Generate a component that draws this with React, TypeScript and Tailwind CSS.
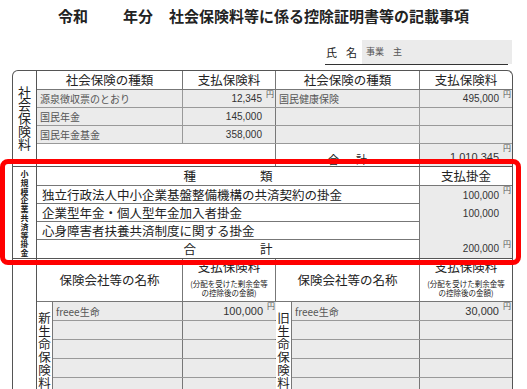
import React from "react";

const jp = "font-['Noto_Sans_CJK_JP',sans-serif]";
const num = "font-['Liberation_Sans','Noto_Sans_CJK_JP',sans-serif]";

function Vertical({ text, className }: { text: string; className: string }) {
  return (
    <div className={`flex flex-col items-center ${className}`}>
      {text.split("").map((c, i) => (
        <span key={i}>{c}</span>
      ))}
    </div>
  );
}

function Amount({
  value,
  yen,
  className = "",
}: {
  value?: string;
  yen?: boolean;
  className?: string;
}) {
  return (
    <div
      className={`relative flex items-center justify-end pr-[13px] bg-[#ebebeb] text-[10px] text-[#333] ${num} ${className}`}
    >
      {value}
      {yen && (
        <span className={`absolute right-[1px] top-[0px] text-[8px] leading-none text-[#555] ${jp}`}>円</span>
      )}
    </div>
  );
}

const social = [
  { l: "源泉徴収票のとおり", la: "12,345", ly: true, r: "国民健康保険", ra: "495,000", ry: true },
  { l: "国民年金", la: "145,000", ly: false, r: "", ra: "", ry: false },
  { l: "国民年金基金", la: "358,000", ly: false, r: "", ra: "", ry: false },
];

const kyosai = [
  { t: "独立行政法人中小企業基盤整備機構の共済契約の掛金", a: "100,000", y: true },
  { t: "企業型年金・個人型年金加入者掛金", a: "100,000", y: false },
  { t: "心身障害者扶養共済制度に関する掛金", a: "", y: false },
];

const lifeNew = [
  { n: "freee生命", a: "100,000", y: true },
  { n: "", a: "", y: false },
  { n: "", a: "", y: false },
  { n: "", a: "", y: false },
  { n: "", a: "", y: false },
];

const lifeOld = [
  { n: "freee生命", a: "30,000", y: true },
  { n: "", a: "", y: false },
  { n: "", a: "", y: false },
  { n: "", a: "", y: false },
  { n: "", a: "", y: false },
];

function PayHeader({ border }: { border?: boolean }) {
  return (
    <div className={`flex flex-col items-center ${border ? "border-r border-[#777]" : ""}`}>
      <span className="text-[12.5px] leading-[13px] mt-[1px]">支払保険料</span>
      <span className="text-[7.5px] leading-[9px] mt-[6px]">(分配を受けた剰余金等</span>
      <span className="text-[7.5px] leading-[9px]">の控除後の金額)</span>
    </div>
  );
}

export default function App() {
  return (
    <div className={`relative w-[527px] h-[389px] overflow-hidden bg-white text-[#222] ${jp}`}>
      {/* タイトル */}
      <div className="h-[30px] flex items-center justify-center text-[15px] font-bold leading-none pt-[1px]">
        <span>令和</span>
        <span className="ml-[35px]">年分</span>
        <span className="ml-[16px]">社会保険料等に係る控除証明書等の記載事項</span>
      </div>

      {/* 氏名 */}
      <div className="h-[40px] flex justify-end pr-[19px] pt-[10px]">
        <div className="relative flex items-center w-[183px] h-[25px] border-b border-[#333]">
          <span className="text-[11px] leading-none ml-[1px]">氏</span>
          <span className="text-[11px] leading-none ml-[9px]">名</span>
          <div className="ml-[5px] flex items-center h-[24px] w-[150px] -mr-[5px] bg-[#ebebeb] text-[9px] text-[#555] pl-[4px]">
            事業<span className="ml-[9px]">主</span>
          </div>
        </div>
      </div>

      {/* 表 */}
      <div className="ml-[12px] w-[501px] border border-b-0 border-[#555] rounded-t-[6px] text-[12.5px]">
        {/* 社会保険料 */}
        <div className="flex">
          <div className="w-[24px] border-r border-[#555] pt-[14px]">
            <Vertical text="社会保険料" className="text-[13px] leading-[13px]" />
          </div>
          <div className="flex-1">
            <div className="grid grid-cols-[146px_93px_144px_92px] h-[19px] border-b border-[#777] leading-[18px] text-center">
              <div className="border-r border-[#777]">社会保険の種類</div>
              <div className="border-r border-[#777]">支払保険料</div>
              <div className="border-r border-[#777]">社会保険の種類</div>
              <div>支払保険料</div>
            </div>
            {social.map((r, i) => (
              <div
                key={i}
                className="grid grid-cols-[146px_93px_144px_92px] h-[18px] border-b border-[#999] text-[10px] text-[#555]"
              >
                <div className="bg-[#ebebeb] border-r border-[#999] pl-[3px] flex items-center">{r.l}</div>
                <Amount value={r.la} yen={r.ly} className="border-r border-[#777]" />
                <div className="bg-[#ebebeb] border-r border-[#999] pl-[3px] flex items-center">{r.r}</div>
                <Amount value={r.ra} yen={r.ry} />
              </div>
            ))}
            <div className="grid grid-cols-[239px_144px_92px] h-[22px]">
              <div className="border-r border-[#777]" />
              <div className="border-r border-[#777] flex items-end justify-center pb-[1px] text-[11px] leading-[12px]">
                合<span className="ml-[17px]">計</span>
              </div>
              <Amount value="1,010,345" yen className="text-[11px] items-end pb-[1px]" />
            </div>
          </div>
        </div>

        {/* 小規模企業共済等掛金 */}
        <div className="flex border-t border-[#555]">
          <div className="w-[24px] border-r border-[#555] pt-[3px]">
            <Vertical text="小規模企業共済等掛金" className="text-[8px] leading-[8.8px] font-bold" />
          </div>
          <div className="flex-1">
            <div className="grid grid-cols-[383px_92px] h-[19px] border-b border-[#777] leading-[18px] text-center">
              <div className="border-r border-[#777]">
                種<span className="ml-[64px]">類</span>
              </div>
              <div>支払掛金</div>
            </div>
            {kyosai.map((r, i) => (
              <div key={i} className="grid grid-cols-[383px_92px] h-[18px] border-b border-[#777]">
                <div className="border-r border-[#777] pl-[5px] flex items-center">{r.t}</div>
                <Amount value={r.a} yen={r.y} />
              </div>
            ))}
            <div className="grid grid-cols-[383px_92px] h-[18px] leading-[18px]">
              <div className="border-r border-[#777] text-center">
                合<span className="ml-[64px]">計</span>
              </div>
              <Amount value="200,000" yen />
            </div>
          </div>
        </div>

        {/* 生命保険料 */}
        <div className="flex border-t border-[#555]">
          <div className="w-[24px] border-r border-[#555]" />
          <div className="flex-1">
            <div className="grid grid-cols-[146px_93px_144px_92px] h-[43px] border-b border-[#777] text-center">
              <div className="border-r border-[#777] flex items-center justify-center text-[12.5px]">保険会社等の名称</div>
              <PayHeader border />
              <div className="border-r border-[#777] flex items-center justify-center text-[12.5px]">保険会社等の名称</div>
              <PayHeader />
            </div>
            <div className="flex">
              <div className="w-[16px] border-r border-[#777] pt-[9px]">
                <Vertical text="新生命保険料" className="text-[12.5px] leading-[13px]" />
              </div>
              <div className="w-[223px] border-r border-[#777]">
                {lifeNew.map((r, i) => (
                  <div key={i} className="grid grid-cols-[130px_93px] h-[19px] border-b border-[#999] text-[10px] text-[#555]">
                    <div className="bg-[#ebebeb] border-r border-[#777] pl-[3px] flex items-center">{r.n}</div>
                    <Amount value={r.a} yen={r.y} className="text-[11px]" />
                  </div>
                ))}
              </div>
              <div className="w-[16px] border-r border-[#777] pt-[9px]">
                <Vertical text="旧生命保険料" className="text-[12.5px] leading-[13px]" />
              </div>
              <div className="flex-1">
                {lifeOld.map((r, i) => (
                  <div key={i} className="grid grid-cols-[128px_92px] h-[19px] border-b border-[#999] text-[10px] text-[#555]">
                    <div className="bg-[#ebebeb] border-r border-[#777] pl-[3px] flex items-center">{r.n}</div>
                    <Amount value={r.a} yen={r.y} className="text-[11px]" />
                  </div>
                ))}
              </div>
            </div>
          </div>
        </div>
      </div>

      {/* 強調枠 */}
      <div className="absolute left-[0px] top-[159px] w-[521px] h-[106px] border-[5px] border-[#ff0000] rounded-[8px]" />
    </div>
  );
}
